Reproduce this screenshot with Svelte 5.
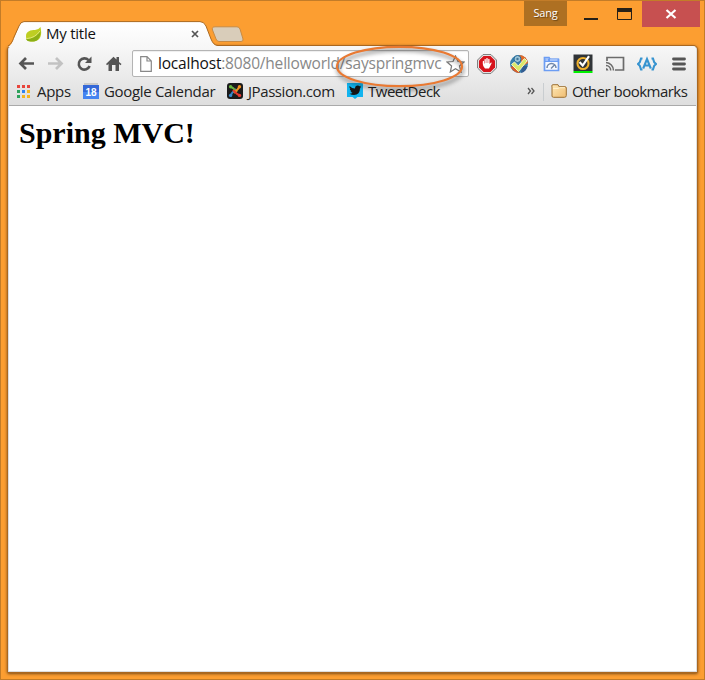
<script>
  const dots = ['#e8453c', '#e8453c', '#e8453c', '#2da25b', '#2f83ee', '#f5b51e', '#2da25b', '#f5b51e', '#f5b51e'];
</script>

<div class="window">
  <header class="strip">
    <div class="tab">
      <svg class="shape" width="214" height="26" viewBox="0 0 214 26">
        <defs><linearGradient id="tabfill" x2="0" y2="1"><stop stop-color="#fff" /><stop offset="1" stop-color="#f7f7f7" /></linearGradient></defs>
        <path d="M0 26C4 23 4.500 21 6 17L11 5Q12.500 1 16 .8H192Q196 .8 198 5L203 18Q205.500 24.500 209 24.500L211 26Z" fill="url(#tabfill)" />
        <path d="M0 25C4 22 4.500 20 6 16L11 5Q12.500 .8 16 .6H192Q196 .6 198 5L203 18Q205.500 24.500 210 24.500" fill="none" stroke="#ab6a22" />
      </svg>
      <svg class="leaf" width="17" height="16" viewBox="0 0 17 16">
        <path d="M15.500 0C17.500 9 15 14 8 14.500C4 15 1 14 1 9C1 4 6 3 10 3Q14 2.500 15.500 0Z" fill="#bdce22" />
        <path d="M1 12C7 12 11 10 15.500 4C15.500 12 12 15 6 14.500Q2 14.500 1 12Z" fill="#8caf16" />
        <path d="M2 11.500Q10 11 15 4" stroke="#e0e779" fill="none" />
      </svg>
      <span class="title">My title</span>
      <svg class="close" width="8" height="8" viewBox="0 0 8 8"><path d="M1 1L7 7M7 1L1 7" stroke="#555" stroke-width="1.700" /></svg>
    </div>
    <svg class="newtab" width="34" height="17" viewBox="0 0 34 17"><path d="M4 .8H26Q28 .8 29 3L32 13Q32.500 15.500 30 15.500H8Q6 15.500 5 13L1.500 4Q.5 1 4 .8Z" fill="#d9cdba" stroke="#c98b43" /></svg>
    <div class="controls">
      <div class="user">Sang</div>
      <svg class="winicons" width="75" height="26" viewBox="0 0 75 26">
        <path d="M17 18H31" stroke="#262017" stroke-width="2" />
        <path d="M50.500 8.500H64.500V18.500H50.500Z" fill="none" stroke="#262017" /><path d="M50 7H65V11H50Z" fill="#262017" />
      </svg>
      <div class="winclose"><svg width="12" height="10" viewBox="0 0 12 10"><path d="M1.500 1L10.500 9M10.500 1L1.500 9" stroke="#fff" stroke-width="2.200" /></svg></div>
    </div>
  </header>

  <main class="frame">
    <div class="chrome">
      <nav class="toolbar">
        <svg class="back" width="17" height="16" viewBox="0 0 17 16"><path d="M8 2L2.500 7.500L8 13M2.500 7.500H16" fill="none" stroke="#555" stroke-width="2.700" /></svg>
        <svg class="forward" width="17" height="16" viewBox="0 0 17 16"><path d="M9 2L14.500 7.500L9 13M14.500 7.500H1" fill="none" stroke="#c2c2c2" stroke-width="2.700" /></svg>
        <svg class="reload" width="17" height="16" viewBox="0 0 17 16"><path d="M12.500 4.200A5.600 5.600 0 1 0 13.600 10" fill="none" stroke="#555" stroke-width="2.600" /><path d="M15.500 .5V7H9Z" fill="#555" /></svg>
        <svg class="home" width="16" height="16" viewBox="0 0 16 16"><path d="M0 8L7.500 .7L10.500 3.500V1H13V6L15.500 8L14.500 9.200L13 8V15H9.500V9H6V15H2.500V8L1 9.200Z" fill="#555" /></svg>
        <div class="omnibox">
          <svg class="page" width="12" height="16" viewBox="0 0 12 16"><path d="M.7 .7H7L11.300 5V15.300H.7ZM7 .7V5H11.300" fill="#fff" stroke="#888" stroke-width="1.200" /></svg>
          <span class="url"><b>localhost</b>:8080/helloworld/sayspringmvc</span>
          <svg class="star" width="19" height="18" viewBox="0 0 19 18"><path d="M9.500 1L12 6.500L18 7L13.500 11L15 17L9.500 13.800L4.300 17L5.600 11L1 7L7 6.500Z" fill="#fff" stroke="#777" stroke-width="1.200" /></svg>
        </div>
        <div class="extensions">
          <svg width="20" height="20" viewBox="0 0 20 20">
            <path d="M6 .6H14L19.400 6V14L14 19.400H6L.6 14V6Z" fill="#eee" stroke="#777" />
            <path d="M6.500 2H13.500L18 6.500V13.500L13.500 18H6.500L2 13.500V6.500Z" fill="#d7141c" />
            <path d="M5.800 7.200Q6.400 6.500 7 7.200V9.500H7.500V5.300Q8.100 4.500 8.800 5.300V9H9.300V4.300Q10 3.500 10.700 4.300V9H11.200V5.200Q11.900 4.500 12.500 5.200V10L14 8.500Q15 8.300 14.500 9.500L12 14.500H8Q5.800 12.500 5.800 10Z" fill="#fff" />
          </svg>
          <svg width="20" height="20" viewBox="0 0 20 20">
            <circle cx="10" cy="10" r="9" fill="#377fac" /><path d="M10 1A9 9 0 0 1 19 9L14 12Z" fill="#e26927" /><path d="M1.500 13Q5 19 11 19L7 11Z" fill="#d85f2b" /><path d="M13 12L18.500 12Q17 18 12 19Z" fill="#325c91" />
            <circle cx="8.500" cy="5" r="3.500" fill="#9dc4d7" stroke="#286b98" /><circle cx="8.500" cy="5" r="1.200" fill="#417798" />
            <path d="M2.500 10.500L5.500 8L9.300 12L15.500 4.500L18 7L9.500 17.500Z" fill="#dbe968" stroke="#f3f4c7" />
          </svg>
          <svg width="20" height="20" viewBox="0 0 20 20"><path d="M3.500 3.500H8L9 5.500H17.500V16.500H3.500Z" fill="#f6f9ff" stroke="#6c9df3" stroke-width="1.700" /><path d="M3 4.500H18V8H3Z" fill="#6c9df3" /><path d="M4.500 6H7M9 6H16.500" stroke="#dce8ff" /><path d="M6 14A4.500 4.500 0 0 1 15 14M10 14.500L13.500 11" fill="none" stroke="#7188aa" stroke-width="1.500" /></svg>
          <svg width="20" height="20" viewBox="0 0 20 20"><path d="M.5 .5H19.500V17H.5Z" fill="#303438" /><path d="M.5 17H19.500V19H.5Z" fill="#00f000" /><circle cx="10" cy="9.500" r="5.500" fill="none" stroke="#efb12c" stroke-width="2.100" /><path d="M6.500 8L9.700 11.500L16 2.200" fill="none" stroke="#fff" stroke-width="2.200" /></svg>
          <svg width="20" height="20" viewBox="0 0 20 20"><path d="M2 7V3.500H18.500V16H10" fill="none" stroke="#6b6b6b" stroke-width="1.700" /><path d="M1 8.500A8 8 0 0 1 8.500 16.500M1 11.500A5 5 0 0 1 5.700 16.500" fill="none" stroke="#6b6b6b" stroke-width="1.500" /><path d="M1 14A3 3 0 0 1 3.500 16.500H1Z" fill="#6b6b6b" /></svg>
          <svg width="20" height="20" viewBox="0 0 20 20"><path d="M5.500 4.500H4L2.800 8.200L1 10L2.800 11.800L4 15.500H5.500M14.500 4.500H16L17.200 8.200L19 10L17.200 11.800L16 15.500H14.500M6.200 14.500L10 5L13.800 14.500M7.500 11.500H12.500" fill="none" stroke="#3794d0" stroke-width="2.100" /></svg>
          <svg width="20" height="20" viewBox="0 0 20 20"><path d="M4.500 5H15.500M4.500 10H15.500M4.500 15H15.500" stroke="#555" stroke-width="2.800" stroke-linecap="round" /></svg>
        </div>
      </nav>
      <nav class="bookmarks">
        <svg class="apps" width="13" height="13" viewBox="0 0 13 13">{#each dots as c, i}<rect x={(i % 3) * 5} y={Math.floor(i / 3) * 5} width="3" height="3" fill={c} />{/each}</svg>
        <span class="lapps">Apps</span>
        <svg class="cal" width="16" height="16" viewBox="0 0 16 16"><path d="M1 0H15V3H1Z" fill="#c9c9c9" /><path d="M0 2H16V16H0Z" fill="#3468d8" /><path d="M0 9H16V16H0Z" fill="#4684f1" /><text x="8" y="12.500" text-anchor="middle" fill="#fff">18</text></svg>
        <span class="lcal">Google Calendar</span>
        <svg class="joomla" width="16" height="16" viewBox="0 0 16 16"><rect width="16" height="16" rx="3" fill="#1b1b1b" /><g fill="none" stroke-width="2"><path d="M3.800 12.200L5 10L9 6" stroke="#3583c5" /><path d="M3.800 3.800L6 5L10 9" stroke="#66b63d" /><path d="M12.200 3.800L11 6L7 10" stroke="#f5901f" /><path d="M12.200 12.200L10 11L6 7" stroke="#e5382c" /></g><circle cx="3.600" cy="3.800" r="1.700" fill="#66b63d" /><circle cx="12.500" cy="3.800" r="1.700" fill="#f5901f" /><circle cx="3.600" cy="12.400" r="1.700" fill="#378bd0" /><circle cx="12.500" cy="12.400" r="1.700" fill="#e93930" /></svg>
        <span class="ljp">JPassion.com</span>
        <svg class="tweet" width="16" height="16" viewBox="0 0 16 16"><path d="M0 0H16V14H10.500L8 16L5.500 14H0Z" fill="#12b4ef" /><path d="M2.500 3Q5 5.500 8 5.500Q8 2.500 10.800 2.500Q12 2.500 12.500 3.200L14 2.800L13.200 4.200L14 4.300L13 5.500Q13 11.500 7 12Q4.500 12 2.500 10.800Q4.500 10.800 5.500 9.800Q4 9.500 3.500 8.200H4.500Q2.700 7 2.700 5.700L3.500 6Q2 4.500 2.500 3Z" fill="#151515" /></svg>
        <span class="ltd">TweetDeck</span>
        <svg class="more" width="8" height="8" viewBox="0 0 8 8"><path d="M1 1L3.500 4L1 7M4.500 1L7 4L4.500 7" fill="none" stroke="#555" stroke-width="1.300" /></svg>
        <i class="divider"></i>
        <svg class="folder" width="16" height="14" viewBox="0 0 16 14"><defs><linearGradient id="folderfill" x2="1" y2="1"><stop stop-color="#ffe9b7" /><stop offset="1" stop-color="#efbd72" /></linearGradient></defs><path d="M1 3V12Q1 13.300 2.500 13.300H13.500Q15.300 13.300 15.300 11.500V4Q15.300 2.700 14 2.700H8L7 .7H2Q.8 .7 .8 2Z" fill="url(#folderfill)" stroke="#9d7033" /><path d="M2 4.500H7L8.500 3.700H14" fill="none" stroke="#fff1cc" /></svg>
        <span class="lother">Other bookmarks</span>
      </nav>
    </div>
    <article><h1>Spring MVC!</h1></article>
  </main>
  <svg class="highlight" width="140" height="56" viewBox="0 0 140 56"><ellipse cx="67.500" cy="26.500" rx="62.500" ry="19.700" fill="none" stroke="#e97932" stroke-width="2.200" /></svg>
</div>

<style>
  :global(body) { margin: 0; }
  svg { display: block; flex: none; }
  .window { position: relative; box-sizing: border-box; width: 705px; height: 680px; padding: 0 7px 7px; border: 1px solid #c37c28; background: #fc9e31; overflow: hidden; font: 15px "Open Sans", "Noto Sans", sans-serif; color: #222; }
  .strip { height: 45px; display: flex; }
  .tab { position: relative; z-index: 2; width: 203px; height: 24px; margin-top: 20px; display: flex; align-items: center; }
  .shape { position: absolute; left: 0; top: 0; }
  .leaf { position: relative; margin-left: 17px; margin-top: 3px; }
  .title { position: relative; width: 145px; margin-left: 4px; margin-top: -1px; white-space: nowrap; font-size: 15px; letter-spacing: -.25px; color: #111; }
  .close { position: relative; width: 8px; margin-top: 1px; }
  .newtab { margin: 25px 0 0 0; }
  .controls { margin-left: auto; margin-right: -3px; display: flex; height: 26px; }
  .user { width: 43px; height: 25px; background: #ae7022; color: #fff; font-size: 11px; letter-spacing: -.2px; line-height: 24px; text-align: center; text-shadow: 1px 1px 1px #654012; }
  .winclose { width: 58px; background: #c75050; display: flex; align-items: center; justify-content: center; }
  .frame { box-sizing: border-box; width: 689px; height: 626px; background: #fff; border: 1px solid #ddd; border-top-color: #f7f7f7; border-radius: 4px 4px 1px 1px; box-shadow: 0 0 0 1px #a96720, 0 1px 3px 1px #7c4c1a; }
  .chrome { box-sizing: border-box; height: 59px; border-bottom: 1px solid #aaa; border-radius: 3px 3px 0 0; background: linear-gradient(#f7f7f7, #dedede); }
  .toolbar { height: 32px; display: flex; align-items: center; }
  .back { margin-left: 9px; }
  .forward { margin-left: 12px; }
  .reload { margin-left: 12px; }
  .home { margin-left: 13px; }
  .toolbar > svg { margin-top: 1px; }
  .omnibox { box-sizing: border-box; width: 337px; height: 27px; margin-left: 10px; margin-top: 1px; border: 1px solid #b4b4b4; border-radius: 2px; background: #fff; box-shadow: inset 0 1px 1px #eee; display: flex; align-items: center; }
  .page { margin-left: 7px; }
  .url { width: 286px; margin-left: 6px; margin-top: -1px; white-space: nowrap; font-size: 15.500px; color: #888; letter-spacing: -.19px; }
  .url b { font-weight: 400; color: #111; }
  .star { margin-left: 2px; }
  .extensions { width: 212px; margin-left: 8px; margin-top: 1px; display: flex; justify-content: space-between; }
  .bookmarks { height: 25px; display: flex; align-items: center; }
  .bookmarks span { white-space: nowrap; letter-spacing: -.32px; line-height: 24px; margin-top: -2px; }
  .apps { margin-left: 8px; }
  .lapps { width: 46px; margin-left: 7px; }
  .cal text { font: bold 10px "Liberation Sans", sans-serif; }
  .lcal { width: 123px; margin-left: 5px; }
  .cal { margin-top: -1px; }
  .joomla, .tweet, .apps, .folder, .more { margin-top: -1px; }
  .bookmarks .ljp { width: 99px; margin-left: 5px; letter-spacing: -.42px; }
  .bookmarks .ltd { width: 159px; margin-left: 5px; letter-spacing: -.5px; }
  .divider { width: 1px; height: 18px; background: #c9cdd0; margin-left: 8px; }
  .folder { margin-left: 7px; }
  .bookmarks .lother { margin-left: 5px; letter-spacing: -.52px; }
  article { padding: 10px 10px; }
  h1 { margin: 0; font: bold 30px/34px "Liberation Serif", serif; color: #000; white-space: nowrap; }
  .highlight { position: absolute; left: 331px; top: 39px; z-index: 4; filter: drop-shadow(1px 3px 2px #0008); }
</style>
